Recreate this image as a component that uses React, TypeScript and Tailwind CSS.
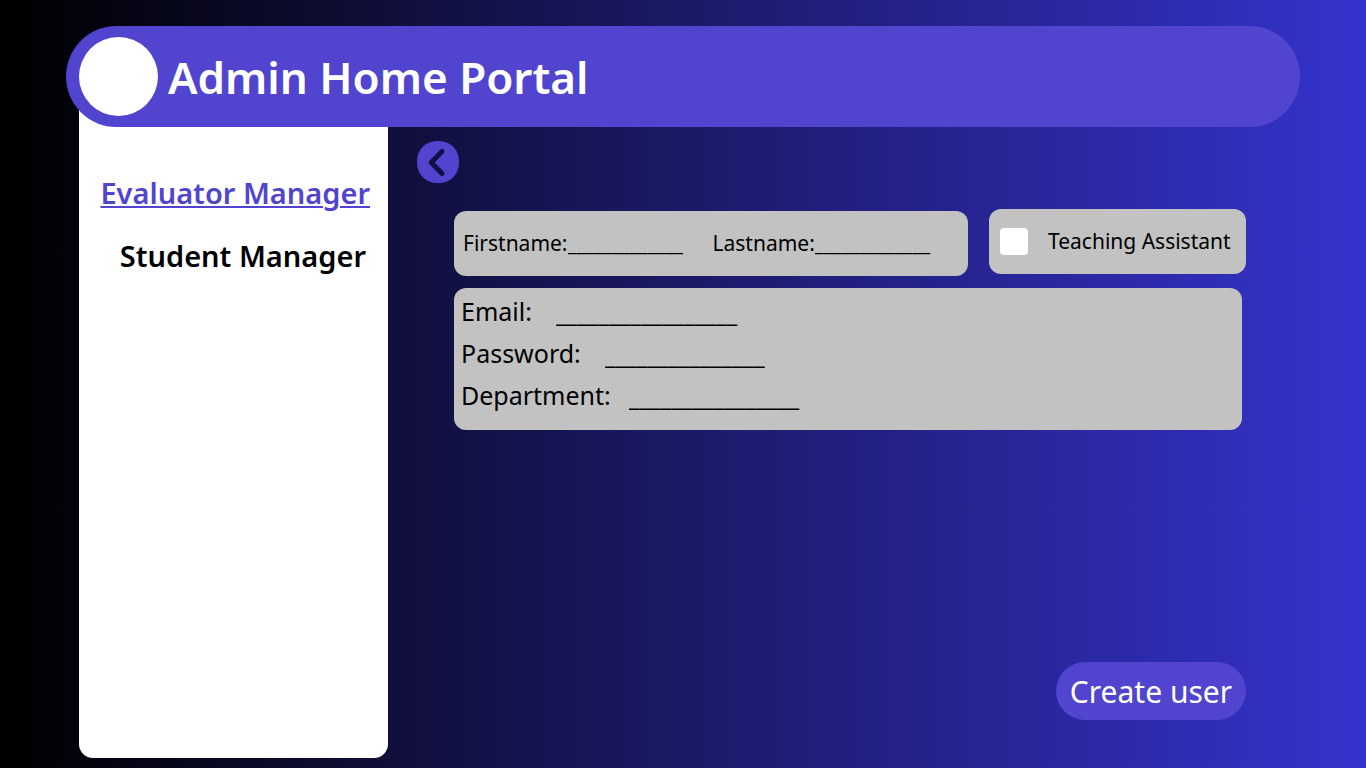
import type { InputHTMLAttributes } from "react";

type LineFieldProps = InputHTMLAttributes<HTMLInputElement> & { id: string; blanks: number };

function LineField({ blanks, className = "", ...rest }: LineFieldProps) {
  return (
    <input
      {...rest}
      placeholder={"_".repeat(blanks)}
      className={`min-w-0 bg-transparent p-0 text-black outline-none placeholder:text-black placeholder:opacity-100 ${className}`}
    />
  );
}

function Header() {
  return (
    <header className="relative z-10 mx-[66px] flex h-[101px] items-center gap-2.5 rounded-full bg-[#5145cf] px-[13px]">
      <div className="size-[79px] shrink-0 rounded-full bg-white" />
      <h1 className="text-[44px] leading-none font-semibold whitespace-nowrap text-white">
        Admin Home Portal
      </h1>
    </header>
  );
}

function Sidebar() {
  return (
    <nav className="-mt-8 flex w-[309px] shrink-0 flex-col items-end gap-6 rounded-b-[14px] bg-white pt-[78px] pr-[18px] text-[29px] leading-[39px] font-semibold whitespace-nowrap">
      <a href="#evaluators" className="text-[#5145cf] underline decoration-2 underline-offset-2">
        Evaluator Manager
      </a>
      <a href="#students" className="pr-1 text-black">
        Student Manager
      </a>
    </nav>
  );
}

export default function App() {
  return (
    <div className="flex min-h-screen flex-col bg-[linear-gradient(90deg,#000000,#3533cd)] pt-[26px] pb-2.5 font-['Noto_Sans',sans-serif]">
      <Header />
      <div className="flex grow pl-[79px]">
        <Sidebar />
        <main className="flex grow flex-col pt-3.5 pr-[120px] pb-[38px] pl-[29px]">
          <button
            type="button"
            aria-label="Back"
            className="flex size-[42px] items-center justify-center rounded-[20px] bg-[#5145cf]"
          >
            <svg viewBox="0 0 42 42" className="size-full" fill="none" stroke="#120f44" strokeWidth="5" strokeLinejoin="round">
              <path d="M25 10.5 L14.2 21.5 L25 32.5" strokeLinecap="round" />
            </svg>
          </button>

          <form className="mt-[26px] flex grow flex-col pl-[37px] text-black" onSubmit={(e) => e.preventDefault()}>
            <div className="flex h-[67px] gap-[21px]">
              <div className="flex h-[65px] grow items-center gap-[26px] self-end rounded-xl bg-[#c2c2c2] px-[9px] text-[21px]">
                <div className="flex items-center">
                  <label htmlFor="firstname">Firstname:</label>
                  <LineField id="firstname" blanks={13} className="w-[119px] placeholder:text-xl" />
                </div>
                <div className="flex items-center">
                  <label htmlFor="lastname">Lastname:</label>
                  <LineField id="lastname" blanks={13} className="w-[119px] placeholder:text-xl" />
                </div>
              </div>
              <div className="flex h-[65px] w-[257px] shrink-0 items-center gap-5 rounded-xl bg-[#c2c2c2] px-[11px] text-[21px] whitespace-nowrap">
                <input
                  id="assistant"
                  type="checkbox"
                  className="h-[27px] w-7 shrink-0 appearance-none rounded-[4px] bg-white checked:bg-[#5145cf]"
                />
                <label htmlFor="assistant">Teaching Assistant</label>
              </div>
            </div>

            <div className="mt-3 mr-1 flex flex-col gap-1.5 rounded-xl bg-[#c2c2c2] px-[7px] pt-[5px] pb-[17px] text-[25px] leading-9">
              <div className="flex gap-6">
                <label htmlFor="email">Email:</label>
                <LineField id="email" type="email" blanks={17} className="w-[182px] pt-1 text-2xl" />
              </div>
              <div className="flex gap-6">
                <label htmlFor="password">Password:</label>
                <LineField id="password" type="password" blanks={15} className="w-[161px] pt-1 text-2xl" />
              </div>
              <div className="flex gap-[18px]">
                <label htmlFor="department">Department:</label>
                <LineField id="department" blanks={16} className="w-[171px] pt-1 text-2xl" />
              </div>
            </div>

            <button
              type="submit"
              className="mt-auto h-[58px] w-[190px] self-end rounded-full bg-[#5145cf] text-[30px] whitespace-nowrap text-white"
            >
              Create user
            </button>
          </form>
        </main>
      </div>
    </div>
  );
}
